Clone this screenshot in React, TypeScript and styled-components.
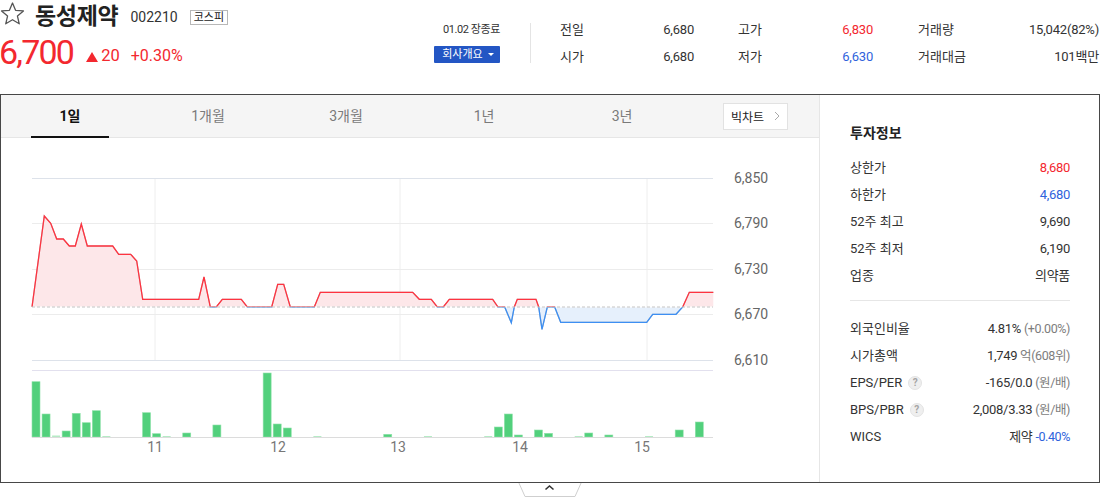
import React from "react";
import styled, { createGlobalStyle } from "styled-components";

const RED = "#f3282f";
const BLUE = "#2f63dc";
const FONT = `Roboto, "Noto Sans CJK KR", "Noto Sans", sans-serif`;

const GlobalStyle = createGlobalStyle`
  html, body { margin: 0; padding: 0; background: #fff; }
  body { font-family: ${FONT}; color: #222; width: 1100px; height: 499px; overflow: hidden; }
  * { box-sizing: border-box; }
`;

const Page = styled.div`
  width: 1100px;
`;

/* ---------- header ---------- */
const Header = styled.header`
  display: flex;
  height: 94px;
`;

const TitleBlock = styled.div`
  width: 434px;
  display: flex;
  flex-direction: column;
`;

const TitleRow = styled.div`
  display: flex;
  align-items: center;
  height: 34px;
`;

const StarSvg = styled.svg`
  align-self: flex-start;
  flex: none;
`;

const Name = styled.h1`
  margin: 0 0 0 10px;
  font-size: 23px;
  font-weight: 700;
  line-height: 28px;
  color: #222;
  letter-spacing: -0.3px;
`;

const Code = styled.span`
  margin-left: 12px;
  font-size: 14px;
  line-height: 20px;
  color: #333;
`;

const Badge = styled.span`
  margin-left: 12px;
  height: 15px;
  padding: 0 3px;
  border: 1px solid #b8b8b8;
  font-size: 11px;
  line-height: 13px;
  color: #222;
`;

const PriceRow = styled.div`
  display: flex;
  align-items: flex-end;
  height: 37px;
  color: ${RED};
`;

const Price = styled.span`
  font-size: 34px;
  line-height: 37px;
  letter-spacing: -1.8px;
  margin-left: -1px;
`;

const Change = styled.span`
  display: flex;
  align-items: center;
  margin-left: 13px;
  font-size: 16.5px;
  line-height: 30px;
`;

const UpTriangle = styled.span`
  display: inline-block;
  width: 0;
  height: 0;
  margin-right: 3px;
  margin-top: 1px;
  border-left: 6px solid transparent;
  border-right: 6px solid transparent;
  border-bottom: 10px solid ${RED};
`;

const Rate = styled.span`
  margin-left: 11px;
  font-size: 16px;
  line-height: 30px;
`;

const StatusBlock = styled.div`
  width: 66px;
  display: flex;
  flex-direction: column;
  align-items: flex-end;
  padding-top: 22px;
`;

const MarketTime = styled.span`
  font-size: 11px;
  line-height: 16px;
  letter-spacing: -0.4px;
  color: #333;
`;

const CompanyButton = styled.button`
  margin-top: 8px;
  width: 66px;
  height: 17px;
  padding: 0 0 0 2px;
  border: 0;
  border-radius: 1px;
  background: #2356c4;
  color: #fff;
  font-family: ${FONT};
  font-size: 11px;
  line-height: 17px;
  display: flex;
  align-items: center;
  justify-content: center;
  gap: 5px;
`;

const Caret = styled.span`
  width: 0;
  height: 0;
  border-left: 3px solid transparent;
  border-right: 3px solid transparent;
  border-top: 3px solid #fff;
`;

const VDivider = styled.div`
  width: 1px;
  height: 40px;
  margin: 23px 29px 0 30px;
  background: #e4e4e4;
`;

const Stats = styled.div`
  display: flex;
  padding-top: 16px;
`;

const StatGroup = styled.dl<{ $w: number; $ml: number }>`
  margin: 0 0 0 ${(p) => p.$ml}px;
  width: ${(p) => p.$w}px;
  display: grid;
  grid-template-columns: auto 1fr;
  grid-auto-rows: 27px;
  align-items: center;
`;

const StatLabel = styled.dt`
  font-size: 13px;
  line-height: 18px;
  color: #333;
`;

const StatValue = styled.dd<{ $c?: string }>`
  margin: 0;
  text-align: right;
  font-size: 13px;
  line-height: 18px;
  letter-spacing: -0.2px;
  color: ${(p) => p.$c || "#333"};
`;

/* ---------- chart box ---------- */
const ChartBox = styled.section`
  display: flex;
  height: 389px;
  border: 1px solid #474747;
`;

const ChartMain = styled.div`
  width: 818px;
  display: flex;
  flex-direction: column;
`;

const TabBar = styled.div`
  display: flex;
  align-items: center;
  height: 43px;
  background: #f5f5f5;
  border-bottom: 1px solid #e6e6e6;
`;

const Tab = styled.button<{ $active?: boolean }>`
  position: relative;
  width: 138px;
  height: 42px;
  padding: 0;
  border: 0;
  background: transparent;
  font-family: ${FONT};
  font-size: 14px;
  line-height: 20px;
  font-weight: ${(p) => (p.$active ? 700 : 400)};
  color: ${(p) => (p.$active ? "#111" : "#7a7a7a")};
  &::after {
    content: "";
    display: ${(p) => (p.$active ? "block" : "none")};
    position: absolute;
    left: 30px;
    right: 30px;
    bottom: -1px;
    height: 2px;
    background: #111;
  }
`;

const BigChartButton = styled.button`
  margin-left: 32px;
  width: 65px;
  height: 27px;
  padding: 0 0 0 7px;
  border: 1px solid #e2e2e2;
  background: #fff;
  display: flex;
  align-items: center;
  gap: 10px;
  font-family: ${FONT};
  font-size: 12px;
  color: #222;
`;

const ChartSvg = styled.svg`
  display: block;
`;

/* ---------- info panel ---------- */
const InfoPanel = styled.aside`
  width: 280px;
  border-left: 1px solid #e6e6e6;
  padding: 28px 29px 0 30px;
`;

const InfoTitle = styled.h3`
  margin: 0 0 11px;
  font-size: 14px;
  font-weight: 700;
  line-height: 20px;
  color: #222;
`;

const InfoList = styled.dl`
  margin: 0;
  display: grid;
  grid-template-columns: auto 1fr;
  grid-auto-rows: 27px;
  align-items: center;
`;

const InfoLabel = styled.dt`
  display: flex;
  align-items: center;
  gap: 6px;
  font-size: 13px;
  line-height: 18px;
  color: #333;
`;

const InfoValue = styled.dd<{ $c?: string }>`
  margin: 0;
  text-align: right;
  font-size: 13px;
  line-height: 18px;
  letter-spacing: -0.3px;
  color: ${(p) => p.$c || "#333"};
`;

const Sub = styled.span<{ $c?: string }>`
  font-size: 12.5px;
  color: ${(p) => p.$c || "#7d7d7d"};
  letter-spacing: -0.4px;
`;

const Help = styled.span`
  display: inline-flex;
  align-items: center;
  justify-content: center;
  width: 14px;
  height: 14px;
  border-radius: 50%;
  background: #efefef;
  border: 1px solid #e3e3e3;
  color: #a5a5a5;
  font-size: 10px;
  line-height: 12px;
  font-weight: 700;
`;

const HDivider = styled.div`
  height: 1px;
  margin: 11px 0 14px;
  background: #e6e6e6;
`;

const HandleRow = styled.div`
  display: flex;
  justify-content: center;
  margin-top: -1px;
`;

/* ---------- data ---------- */
const pricePts: [number, number][] = [
  [32, 307], [44.3, 216], [50.7, 223.3], [56.7, 239], [63.3, 239], [69.3, 246], [75.3, 246],
  [81.3, 224], [87.3, 246], [112.7, 246], [118.7, 254.3], [130.7, 254.3], [136.7, 261],
  [142.7, 299.3], [198.7, 299.3], [204, 277], [210.3, 307], [216.3, 307], [222.3, 299.3],
  [241.3, 299.3], [247.3, 307], [271.7, 307], [277.7, 284.3], [283.7, 284.3], [290.3, 307],
  [314.3, 307], [320.3, 292.3], [412.7, 292.3], [419.3, 299.3], [431.3, 299.3], [437.3, 307],
  [443.3, 307], [449.3, 299.3], [492.7, 299.3], [498, 307], [504.7, 307], [511.3, 322.7],
  [514.3, 307], [517.3, 299.3], [536, 299.3], [538.7, 307], [542, 329.3], [547.3, 307],
  [554.7, 307], [560.7, 322.3], [646.7, 322.3], [652.7, 314.3], [676, 314.3], [682.7, 307],
  [689.3, 292.3], [713.3, 292.3],
];

const bars: [number, number][] = [
  [0, 381.7], [1, 414], [2, 435.5], [3, 431], [4, 413.3], [5, 422.7], [6, 410.7], [7, 436],
  [11, 412.7], [12, 433.7], [13, 436], [15, 433], [18, 425], [23, 373], [24, 424], [25, 428],
  [28, 436], [35, 434.3], [39, 436], [45, 436], [46, 427], [47, 414], [48, 435], [50, 430],
  [51, 433.3], [54, 436], [55, 433], [57, 435], [61, 436], [64, 430], [66, 422],
];

const yTicks: [string, number][] = [
  ["6,850", 178], ["6,790", 223], ["6,730", 269], ["6,670", 314], ["6,610", 360],
];

const xTicks: [string, number][] = [
  ["11", 155], ["12", 278], ["13", 398], ["14", 520], ["15", 642],
];

const BASE = 307;

const linePath = "M" + pricePts.map(([x, y]) => `${x} ${y}`).join(" L");
const areaPath = linePath + ` L713.3 ${BASE} L32 ${BASE} Z`;

function Chart() {
  return (
    <ChartSvg width={818} height={344} viewBox="1 138 818 344">
      <defs>
        <clipPath id="above">
          <rect x="0" y="0" width="820" height={BASE - 0.5} />
        </clipPath>
        <clipPath id="below">
          <rect x="0" y={BASE + 0.5} width="820" height="200" />
        </clipPath>
      </defs>
      {[155, 400, 647].map((x) => (
        <line key={x} x1={x} x2={x} y1={178} y2={360} stroke="#eeeeee" strokeWidth={1} />
      ))}
      {yTicks.map(([t, y], i) => (
        <line
          key={t}
          x1={32}
          x2={713}
          y1={y + 0.5}
          y2={y + 0.5}
          stroke={i === 0 || i === 4 ? "#dde2ea" : "#ececec"}
          strokeWidth={1}
        />
      ))}
      <line x1={32} x2={713} y1={370.5} y2={370.5} stroke="#e2e0ee" strokeWidth={1} />
      <path d={areaPath} fill="#fde7e9" clipPath="url(#above)" />
      <path d={areaPath} fill="#e6f0fc" clipPath="url(#below)" />
      <line x1={32} x2={713} y1={BASE} y2={BASE} stroke="#c4c4c4" strokeDasharray="3 2" strokeWidth={1} />
      <path d={linePath} fill="none" stroke="#bdbdbd" strokeWidth={1.2} />
      <path d={linePath} fill="none" stroke="#ff3340" strokeWidth={1.3} clipPath="url(#above)" />
      <path d={linePath} fill="none" stroke="#3d8ff3" strokeWidth={1.3} clipPath="url(#below)" />
      {bars.map(([i, top]) => {
        const tiny = 437 - top < 2;
        return (
          <rect
            key={i}
            x={32 + i * 10.05}
            y={top}
            width={8}
            height={437 - top}
            fill={tiny ? "#b6ebc6" : "#52d07c"}
            stroke={tiny ? "none" : "#8fe2aa"}
            strokeWidth={0.6}
          />
        );
      })}
      <line x1={32} x2={713} y1={437.5} y2={437.5} stroke="#dcdcdc" strokeWidth={1.2} />
      {yTicks.map(([t, y]) => (
        <text key={t} x={734} y={y + 1} dominantBaseline="middle" fontSize={14} fill="#666" fontFamily="Roboto, sans-serif">
          {t}
        </text>
      ))}
      {xTicks.map(([t, x]) => (
        <text key={t} x={x} y={448} textAnchor="middle" dominantBaseline="middle" fontSize={14} fill="#777" fontFamily="Roboto, sans-serif">
          {t}
        </text>
      ))}
    </ChartSvg>
  );
}

const stats = [
  { w: 134, ml: 0, rows: [["전일", "6,680"], ["시가", "6,680"]] },
  { w: 135, ml: 44, rows: [["고가", "6,830", RED], ["저가", "6,630", BLUE]] },
  { w: 181, ml: 45, rows: [["거래량", "15,042(82%)"], ["거래대금", "101백만"]] },
];

const tabs = ["1일", "1개월", "3개월", "1년", "3년"];

export default function App() {
  return (
    <Page>
      <GlobalStyle />
      <Header>
        <TitleBlock>
          <TitleRow>
            <StarSvg width={25} height={26} viewBox="0 0 25 26">
              <polygon
                points="12.5,3 15.56,10.29 23.44,10.95 17.45,16.11 19.26,23.8 12.5,19.7 5.74,23.8 7.55,16.11 1.56,10.95 9.44,10.29"
                fill="none"
                stroke="#555"
                strokeWidth={1.3}
                strokeLinejoin="round"
              />
            </StarSvg>
            <Name>동성제약</Name>
            <Code>002210</Code>
            <Badge>코스피</Badge>
          </TitleRow>
          <PriceRow>
            <Price>6,700</Price>
            <Change>
              <UpTriangle />
              20
            </Change>
            <Rate>+0.30%</Rate>
          </PriceRow>
        </TitleBlock>
        <StatusBlock>
          <MarketTime>01.02 장종료</MarketTime>
          <CompanyButton>
            회사개요 <Caret />
          </CompanyButton>
        </StatusBlock>
        <VDivider />
        <Stats>
          {stats.map((g, gi) => (
            <StatGroup key={gi} $w={g.w} $ml={g.ml}>
              {g.rows.map(([l, v, c]) => (
                <React.Fragment key={l}>
                  <StatLabel>{l}</StatLabel>
                  <StatValue $c={c}>{v}</StatValue>
                </React.Fragment>
              ))}
            </StatGroup>
          ))}
        </Stats>
      </Header>

      <ChartBox>
        <ChartMain>
          <TabBar>
            {tabs.map((t, i) => (
              <Tab key={t} $active={i === 0}>
                {t}
              </Tab>
            ))}
            <BigChartButton>
              빅차트
              <svg width={6} height={10} viewBox="0 0 6 10">
                <polyline points="1,1 5,5 1,9" fill="none" stroke="#aaa" strokeWidth={1} />
              </svg>
            </BigChartButton>
          </TabBar>
          <Chart />
        </ChartMain>
        <InfoPanel>
          <InfoTitle>투자정보</InfoTitle>
          <InfoList>
            <InfoLabel>상한가</InfoLabel>
            <InfoValue $c={RED}>8,680</InfoValue>
            <InfoLabel>하한가</InfoLabel>
            <InfoValue $c={BLUE}>4,680</InfoValue>
            <InfoLabel>52주 최고</InfoLabel>
            <InfoValue>9,690</InfoValue>
            <InfoLabel>52주 최저</InfoLabel>
            <InfoValue>6,190</InfoValue>
            <InfoLabel>업종</InfoLabel>
            <InfoValue>의약품</InfoValue>
          </InfoList>
          <HDivider />
          <InfoList>
            <InfoLabel>외국인비율</InfoLabel>
            <InfoValue>
              4.81% <Sub>(+0.00%)</Sub>
            </InfoValue>
            <InfoLabel>시가총액</InfoLabel>
            <InfoValue>
              1,749 <Sub>억(608위)</Sub>
            </InfoValue>
            <InfoLabel>
              EPS/PER <Help>?</Help>
            </InfoLabel>
            <InfoValue>
              -165/0.0 <Sub>(원/배)</Sub>
            </InfoValue>
            <InfoLabel>
              BPS/PBR <Help>?</Help>
            </InfoLabel>
            <InfoValue>
              2,008/3.33 <Sub>(원/배)</Sub>
            </InfoValue>
            <InfoLabel>WICS</InfoLabel>
            <InfoValue>
              제약 <Sub $c={BLUE}>-0.40%</Sub>
            </InfoValue>
          </InfoList>
        </InfoPanel>
      </ChartBox>
      <HandleRow>
        <svg width={64} height={16} viewBox="0 0 64 16">
          <polygon points="0.5,0 63.5,0 57,14.5 7,14.5" fill="#fff" stroke="#cfcfcf" strokeWidth={1} />
          <line x1={0} x2={64} y1={0.5} y2={0.5} stroke="#474747" strokeWidth={1} />
          <polyline points="27.5,7.5 31.5,4 35.5,7.5" fill="none" stroke="#333" strokeWidth={1.6} />
        </svg>
      </HandleRow>
    </Page>
  );
}
